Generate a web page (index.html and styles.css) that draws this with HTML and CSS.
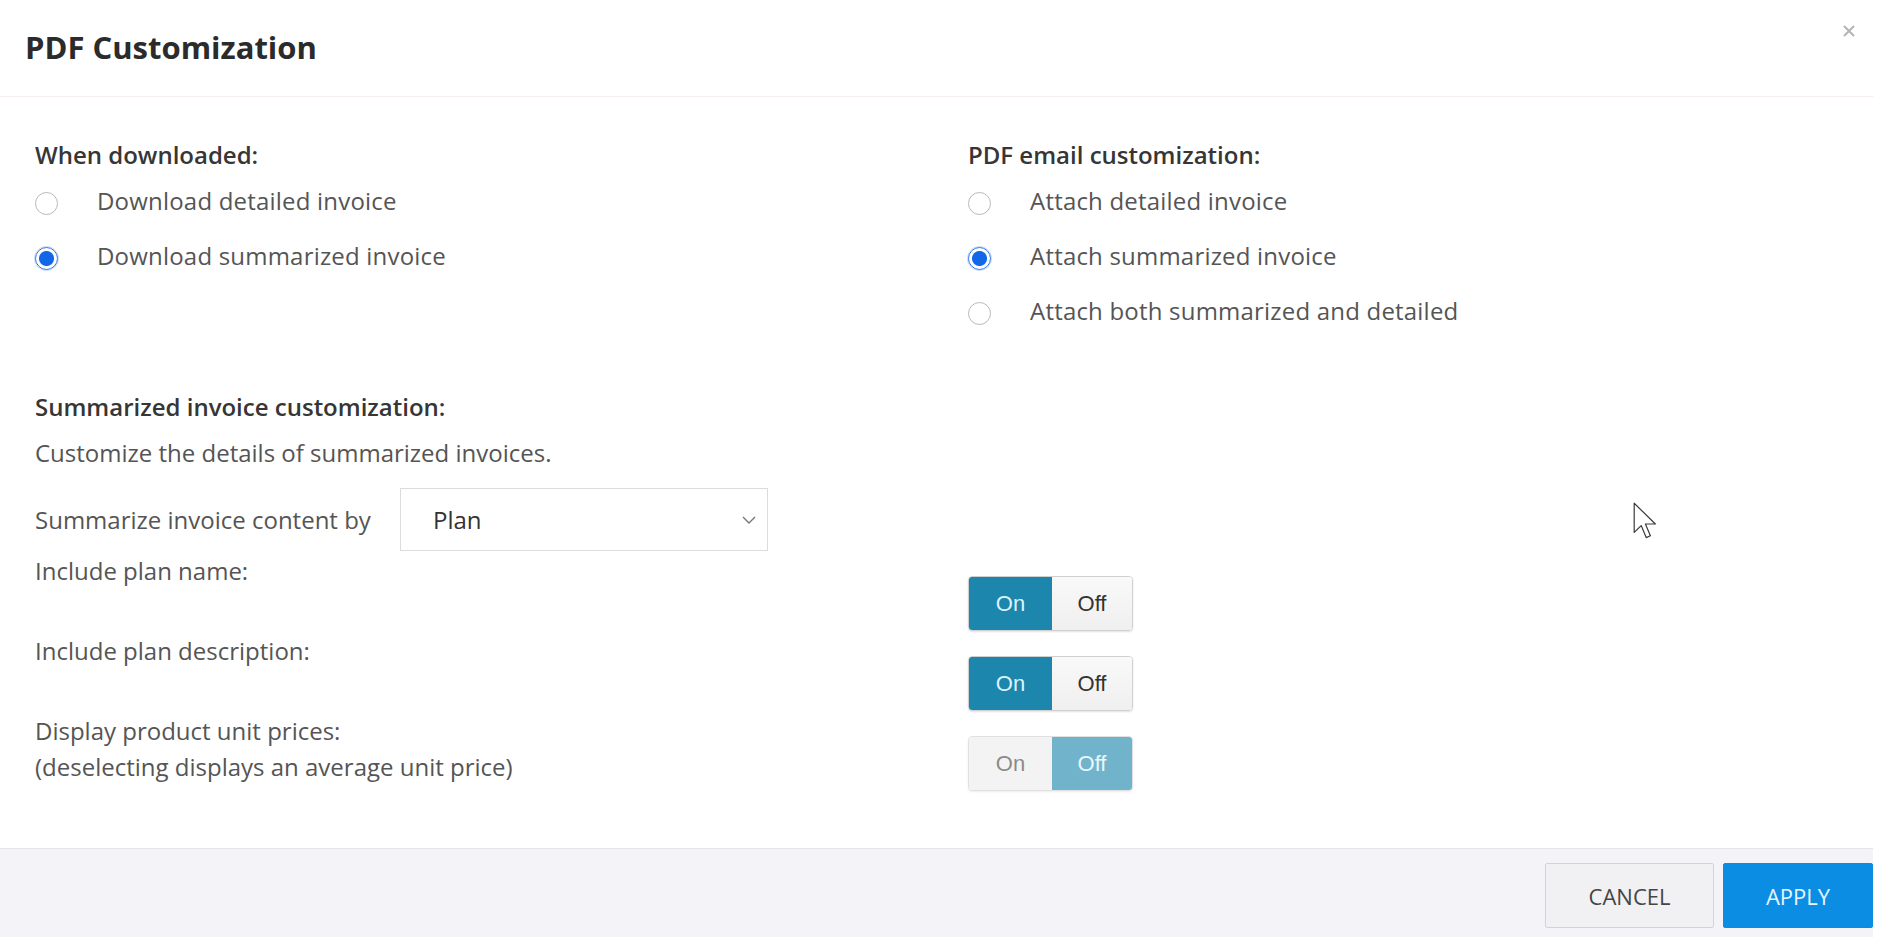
FILE: index.html
```
<!DOCTYPE html>
<html>

<head lang="en">
    <meta charset="UTF-8">
    <title>PDF Customization</title>
    <link rel="stylesheet" href="styles.css">
</head>

<body>
    <div class="modal">
        <div class="modal-header">
            <h1 class="modal-title">PDF Customization</h1>
            <a class="close-btn" href="javascript:;">
                <svg width="12" height="12" viewBox="0 0 12 12"><path d="M1 1L11 11M11 1L1 11" stroke="#b4b4b4" stroke-width="2" /></svg>
            </a>
        </div>

        <div class="modal-body">
            <div class="options">
                <div class="option-group">
                    <div class="group-title">When downloaded:</div>
                    <label class="radio-row"><span class="radio"></span><span>Download detailed invoice</span></label>
                    <label class="radio-row"><span class="radio checked"></span><span>Download summarized invoice</span></label>
                </div>
                <div class="option-group">
                    <div class="group-title">PDF email customization:</div>
                    <label class="radio-row"><span class="radio"></span><span>Attach detailed invoice</span></label>
                    <label class="radio-row"><span class="radio checked"></span><span>Attach summarized invoice</span></label>
                    <label class="radio-row"><span class="radio"></span><span>Attach both summarized and detailed</span></label>
                </div>
            </div>

            <!-- 汇总发票设置 -->
            <div class="summary">
                <div class="group-title">Summarized invoice customization:</div>
                <p class="summary-desc">Customize the details of summarized invoices.</p>
                <div class="select-row">
                    <span class="select-label">Summarize invoice content by</span>
                    <div class="select-box">
                        <span>Plan</span>
                        <svg width="14" height="8" viewBox="0 0 14 8"><path d="M1 1L7 7L13 1" fill="none" stroke="#777" stroke-width="1.4" /></svg>
                    </div>
                </div>
                <div class="switch-list">
                    <div class="switch-row">
                        <div class="switch-label">Include plan name:</div>
                        <div class="switch"><span class="switch-on active">On</span><span class="switch-off">Off</span></div>
                    </div>
                    <div class="switch-row">
                        <div class="switch-label">Include plan description:</div>
                        <div class="switch"><span class="switch-on active">On</span><span class="switch-off">Off</span></div>
                    </div>
                    <div class="switch-row">
                        <div class="switch-label">Display product unit prices:<br>(deselecting displays an average unit price)</div>
                        <div class="switch disabled"><span class="switch-on">On</span><span class="switch-off active">Off</span></div>
                    </div>
                </div>
            </div>
        </div>

        <div class="modal-footer">
            <button class="btn btn-cancel">CANCEL</button>
            <button class="btn btn-apply">APPLY</button>
        </div>
    </div>

    <!-- 鼠标指针 -->
    <div class="cursor">
        <svg width="24" height="38" viewBox="0 0 12 19"><path d="M0.6 0.6L0.6 15.2L4.1 11.8L6.6 17.8L8.7 16.9L6.2 11L11.2 11Z" fill="#fff" stroke="#3a3a3a" stroke-width="0.6" stroke-linejoin="round" /></svg>
    </div>
</body>

</html>
```

FILE: styles.css
```
* {
    padding: 0px;
    margin: 0px;
    box-sizing: border-box;
}

body {
    background: #ffffff;
    font-family: "Open Sans", "Liberation Sans", sans-serif;
    font-size: 24px;
    line-height: 36px;
    color: #555555;
    overflow: hidden;
    height: 937px;
}

/* 弹框 */
.modal {
    width: 1873px;
    height: 937px;
    background: #ffffff;
    display: flex;
    flex-direction: column;
}

.modal-header {
    height: 97px;
    display: flex;
    justify-content: space-between;
    padding: 0px 18px 2px 25px;
    border-bottom: 1px solid #f3edf2;
}

.modal-title {
    font-size: 31px;
    font-weight: 700;
    color: #2b2b2b;
    line-height: 94px;
}

.close-btn {
    margin-top: 25px;
    height: 12px;
}

.close-btn svg {
    display: block;
}

.modal-body {
    padding: 40px 0px 57px 35px;
}

.options {
    display: grid;
    grid-template-columns: 933px 1fr;
}

.group-title {
    font-weight: 600;
    color: #363636;
    margin-bottom: 10px;
}

.radio-row {
    display: flex;
    align-items: flex-start;
    gap: 39px;
    margin-bottom: 19px;
    letter-spacing: 0.2px;
}

.radio-row:last-child {
    margin-bottom: 0px;
}

.radio {
    width: 23px;
    height: 23px;
    margin-top: 9px;
    border-radius: 50%;
    border: 1px solid #b9b9b9;
    background: #ffffff;
}

.radio.checked {
    border: 1px solid #2a76e8;
    background: radial-gradient(circle, #1266e8 0px, #1266e8 7px, #ffffff 8px);
    box-shadow: 0 0 0 1px #cfe0fb;
}

.summary {
    margin-top: 60px;
}

.summary-desc {
    margin-top: -10px;
    padding-top: 10px;
}

.select-row {
    display: flex;
    align-items: center;
    margin-top: 17px;
}

.select-label {
    width: 365px;
}

.select-box {
    width: 368px;
    height: 63px;
    border: 1px solid #dcdcdc;
    display: flex;
    align-items: center;
    justify-content: space-between;
    padding: 0px 11px 0px 32px;
    color: #333333;
}

.switch-list {
    display: flex;
    flex-direction: column;
    gap: 2px;
    margin-top: 2px;
}

.switch-row {
    display: grid;
    grid-template-columns: 933px auto;
}

.switch {
    margin-top: 23px;
    width: 165px;
    height: 55px;
    display: flex;
    border: 1px solid #d0d0d0;
    border-radius: 4px;
    overflow: hidden;
    box-shadow: 0 1px 2px rgba(0, 0, 0, .12);
    font-family: "Liberation Sans", Arial, sans-serif;
    font-size: 22px;
    line-height: 53px;
    text-align: center;
}

.switch span {
    color: #333333;
    background: linear-gradient(#f9f9f9, #efefef);
}

.switch .switch-on {
    width: 83px;
}

.switch .switch-off {
    width: 80px;
}

.switch span.active {
    background: #1d86ad;
    color: #dff2fb;
}

.switch.disabled {
    opacity: 0.62;
}

.switch.disabled .switch-on {
    background: #ececec;
    color: #444444;
}

/* 底部按钮 */
.modal-footer {
    flex: 1;
    background: #f4f3f8;
    border-top: 1px solid #e6e3ec;
    display: flex;
    justify-content: flex-end;
    align-items: flex-start;
    gap: 9px;
    padding-top: 14px;
}

.btn {
    height: 65px;
    font-family: "Open Sans", "Liberation Sans", sans-serif;
    font-size: 22px;
    border-radius: 2px;
}

.btn-cancel {
    width: 169px;
    background: #f1f1f3;
    border: 1px solid #d4d4d6;
    color: #454545;
}

.btn-apply {
    width: 150px;
    background: #0b8de3;
    border: 1px solid #0b8de3;
    color: #e8f4ff;
}

.cursor {
    position: absolute;
    left: 1633px;
    top: 502px;
}

.cursor svg {
    display: block;
}
```
